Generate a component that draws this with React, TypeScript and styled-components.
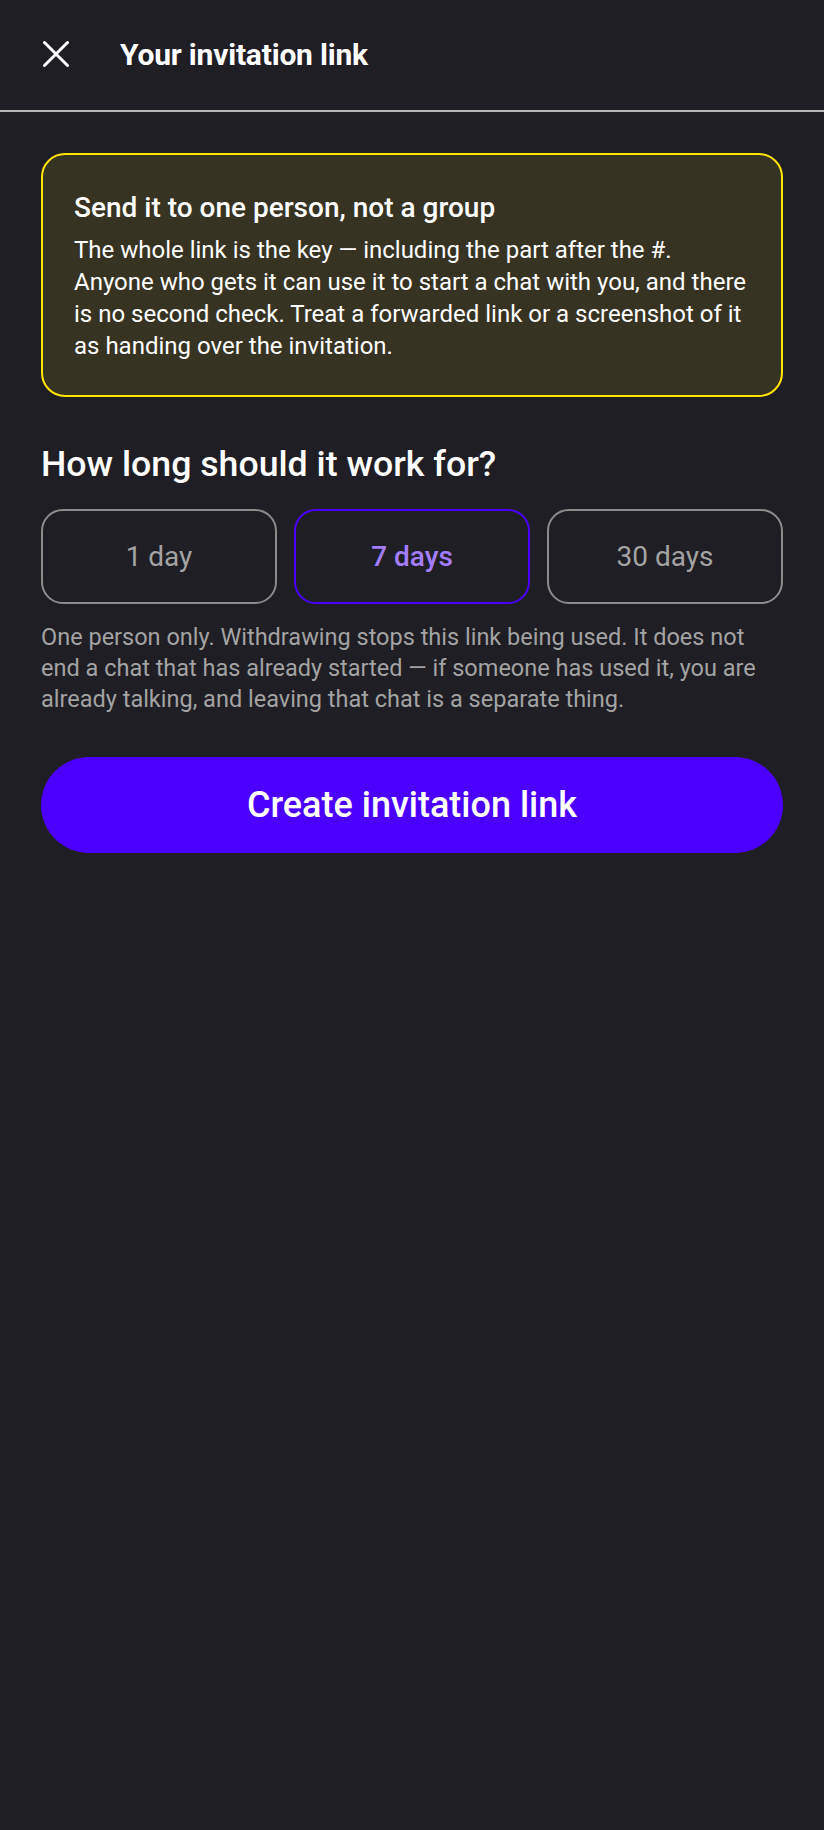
import { useState } from "react";
import styled, { createGlobalStyle } from "styled-components";

const GlobalStyle = createGlobalStyle`
  html, body {
    margin: 0;
    padding: 0;
    background: #1f1e24;
  }
  body {
    font-family: Roboto, "Noto Sans", "Liberation Sans", sans-serif;
    color: #ffffff;
  }
  * {
    box-sizing: border-box;
  }
`;

const durations = ["1 day", "7 days", "30 days"];

const App = (): JSX.Element => {
  const [selected, setSelected] = useState(1);

  return (
    <Page>
      <GlobalStyle />
      <TopBar>
        <CloseButton aria-label="Close">
          <svg width="26" height="26" viewBox="0 0 26 26">
            <path
              d="M1.5 1.5 L24.5 24.5 M24.5 1.5 L1.5 24.5"
              stroke="#ffffff"
              strokeWidth="3"
              strokeLinecap="round"
            />
          </svg>
        </CloseButton>
        <Title>Your invitation link</Title>
      </TopBar>

      <Content>
        <Warning>
          <WarningTitle>Send it to one person, not a group</WarningTitle>
          <WarningText>
            The whole link is the key — including the part after the #. Anyone
            who gets it can use it to start a chat with you, and there is no
            second check. Treat a forwarded link or a screenshot of it as
            handing over the invitation.
          </WarningText>
        </Warning>

        <Question>How long should it work for?</Question>

        <Options>
          {durations.map((label, i) => (
            <Option
              key={label}
              $active={i === selected}
              onClick={() => setSelected(i)}
            >
              {label}
            </Option>
          ))}
        </Options>

        <Hint>
          One person only. Withdrawing stops this link being used. It does not
          end a chat that has already started — if someone has used it, you are
          already talking, and leaving that chat is a separate thing.
        </Hint>

        <CreateButton>Create invitation link</CreateButton>
      </Content>
    </Page>
  );
};

const Page = styled.div`
  min-height: 1830px;
  background: #1f1e24;
`;

const TopBar = styled.header`
  height: 112px;
  display: flex;
  align-items: center;
  padding: 0 0 2px 42px;
  border-bottom: 2px solid #b4b4b4;
`;

const CloseButton = styled.button`
  width: 28px;
  height: 28px;
  padding: 0;
  border: none;
  background: none;
  display: flex;
  align-items: center;
  justify-content: center;
  cursor: pointer;
`;

const Title = styled.h1`
  margin: 0 0 0 50px;
  font-size: 30px;
  font-weight: 700;
  letter-spacing: -0.2px;
  color: #ffffff;
`;

const Content = styled.main`
  padding: 41px 41px;
  display: flex;
  flex-direction: column;
`;

const Warning = styled.section`
  background: #373322;
  border: 2px solid #ffe600;
  border-radius: 24px;
  padding: 36px 31px 33px;
`;

const WarningTitle = styled.h2`
  margin: 0 0 9px;
  font-size: 28px;
  line-height: 34px;
  font-weight: 500;
  color: #ffffff;
`;

const WarningText = styled.p`
  margin: 0;
  font-size: 24px;
  line-height: 32px;
  color: #ffffff;
`;

const Question = styled.h2`
  margin: 45px 0 0;
  font-size: 35.7px;
  line-height: 44px;
  font-weight: 500;
  color: #ffffff;
`;

const Options = styled.div`
  margin-top: 23px;
  display: grid;
  grid-template-columns: repeat(3, 1fr);
  gap: 17px;
`;

const Option = styled.button<{ $active: boolean }>`
  height: 95px;
  border-radius: 22px;
  background: transparent;
  border: 2px solid ${(p) => (p.$active ? "#4a00ff" : "#8c8c8c")};
  color: ${(p) => (p.$active ? "#a47dff" : "#a3a3a3")};
  font-family: inherit;
  font-size: 28px;
  font-weight: ${(p) => (p.$active ? 500 : 400)};
  cursor: pointer;
`;

const Hint = styled.p`
  margin: 18px 0 0;
  font-size: 23.5px;
  line-height: 31px;
  color: #a3a3a3;
`;

const CreateButton = styled.button`
  margin-top: 42px;
  height: 96px;
  border: none;
  border-radius: 48px;
  background: #4b00ff;
  color: #ffffff;
  font-family: inherit;
  font-size: 36px;
  font-weight: 500;
  cursor: pointer;
`;

export default App;
